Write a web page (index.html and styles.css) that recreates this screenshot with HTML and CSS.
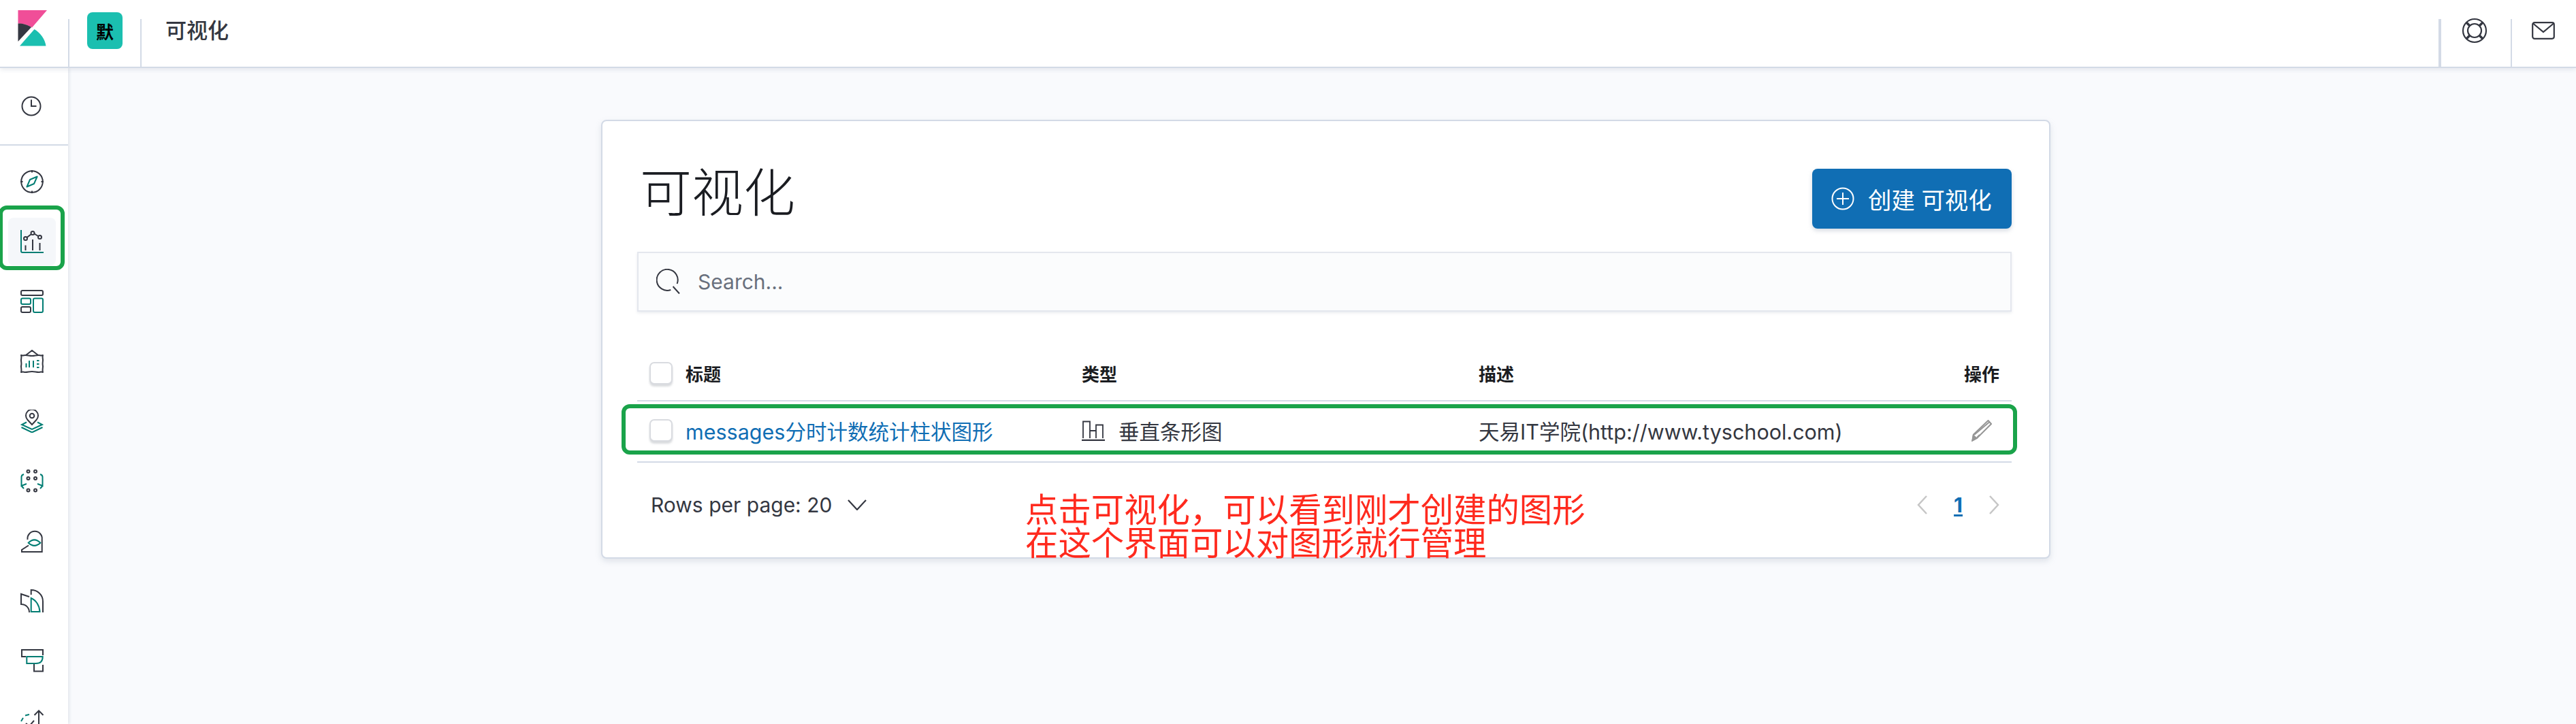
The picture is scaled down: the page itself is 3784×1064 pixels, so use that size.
FILE: index.html
```html
<!DOCTYPE html>
<html lang="zh">
<head>
<meta charset="utf-8">
<title>可视化</title>
<link rel="stylesheet" href="styles.css">
</head>
<body>
<header class="topbar">
  <div class="logo-cell">
    <svg class="logo" width="43" height="53" viewBox="0 0 43 53">
      <path fill="#f04e98" d="M0.5 0H43L21 25.5C15 21.5 8 19.5 0.5 19.5Z"/>
      <path fill="#343741" d="M0.5 19.5C8 19.5 15 21.5 20 25L0.5 46Z"/>
      <path fill="#1bbfb0" d="M3 52.5L24.5 28C33 33 40 42 41.5 52.5Z"/>
    </svg>
  </div>
  <div class="space-cell"><span class="badge">默</span></div>
  <div class="crumb-cell">可视化</div>
  <div class="top-icon top-help">
    <svg width="38" height="38" viewBox="0 0 38 38" fill="none" stroke="#343741">
      <circle cx="19" cy="19" r="17" stroke-width="2.2"/>
      <circle cx="19" cy="19" r="10" stroke-width="2.2"/>
      <path stroke-width="3.5" d="M7 7l5 5M31 7l-5 5M7 31l5-5M31 31l-5-5"/>
    </svg>
  </div>
  <div class="top-icon top-mail">
    <svg width="34" height="26" viewBox="0 0 34 26" fill="none" stroke="#343741" stroke-width="2.2">
      <rect x="1.2" y="1.2" width="31.6" height="23.6" rx="3"/>
      <path d="M2 2.5L17 15L32 2.5"/>
    </svg>
  </div>
</header>

<div class="shell">
  <nav class="sidebar">
    <div class="recent">
      <svg class="icon" width="30" height="30" viewBox="0 0 30 30" fill="none" stroke="#343741" stroke-width="2">
        <circle cx="15" cy="15" r="13.5"/><path d="M15 5.5V15H22.5"/>
      </svg>
    </div>
    <ul class="nav-list">
      <li class="nav-item">
        <svg width="34" height="34" viewBox="0 0 34 34" fill="none" stroke-width="2">
          <circle cx="17" cy="17" r="15.8" stroke="#343741"/>
          <path stroke="#343741" d="M17 0v3.5M17 30.5V34M0 17h3.5M30.5 17H34"/>
          <path stroke="#017d73" stroke-linejoin="round" d="M24.6 9.5L20 20L9.5 24.5L14 14Z"/>
        </svg>
      </li>
      <li class="nav-item is-active">
        <span class="active-bg">
          <svg width="34" height="34" viewBox="0 0 34 34" fill="none" stroke-width="2">
            <path stroke="#017d73" d="M1 0V31a2 2 0 0 0 2 2H34"/>
            <path stroke="#343741" d="M9.500 11L16 6M20.500 5.500L26 9M7.500 22.500V30M18 14V30M28.500 19V30"/>
            <circle cx="7.500" cy="12.500" r="2.500" stroke="#343741"/>
            <circle cx="18" cy="4.500" r="2.500" stroke="#343741"/>
            <circle cx="28.500" cy="10.500" r="2.500" stroke="#343741"/>
          </svg>
        </span>
      </li>
      <li class="nav-item">
        <svg width="34" height="34" viewBox="0 0 34 34" fill="none" stroke-width="2">
          <rect x="1" y="1" width="32" height="7" rx="2" stroke="#343741"/>
          <rect x="1" y="12.500" width="14" height="8.500" rx="2" stroke="#017d73"/>
          <rect x="1" y="25" width="14" height="8" rx="2" stroke="#343741"/>
          <rect x="19" y="12.500" width="14" height="20.500" rx="2" stroke="#017d73"/>
        </svg>
      </li>
      <li class="nav-item">
        <svg width="34" height="34" viewBox="0 0 34 34" fill="none" stroke-width="2">
          <path stroke="#343741" stroke-linejoin="round" d="M8 8L17 1L26 8M1 8C4 9 5 8 7 8C11 8 13 9 17 9C21 9 23 8 27 8C29 8 30 9 33 8C32 11 33 13 33 15C33 18 32 20 33 24C33 27 32 30 33 33C30 32 29 33 27 33C23 33 21 32 17 32C13 32 11 33 7 33C5 33 4 32 1 33C2 30 1 27 1 24C2 20 1 18 1 15C1 13 2 11 1 8Z"/>
          <path stroke="#017d73" d="M8.500 20V26M13 16V26M19 16V26M24 16H27.500M24 21H27.500M24 26H27.500"/>
        </svg>
      </li>
      <li class="nav-item">
        <svg width="34" height="34" viewBox="0 0 34 34" fill="none" stroke-width="2">
          <path stroke="#343741" d="M17 22L10.500 15A9 9 0 1 1 23.500 15Z"/>
          <circle cx="17" cy="9" r="3.300" stroke="#343741"/>
          <path stroke="#017d73" d="M9 18.500L2 22L17 29L32 22L25 18.500M1.500 26L17 33.500L32.500 26"/>
        </svg>
      </li>
      <li class="nav-item">
        <svg width="34" height="34" viewBox="0 0 34 34" fill="none" stroke-width="2">
          <g stroke="#343741">
            <circle cx="11.500" cy="2.800" r="2"/><circle cx="22" cy="2.800" r="2"/>
            <circle cx="11.500" cy="13" r="2"/><circle cx="22" cy="13" r="2"/>
            <circle cx="11.500" cy="30.500" r="2"/><circle cx="22" cy="30.500" r="2"/>
          </g>
          <path stroke="#017d73" d="M5 7Q1.500 8 1.500 11V24L9 21M1.500 24L5 28M29 7Q32.500 8 32.500 11V24L25 21M32.500 24L29 28"/>
        </svg>
      </li>
      <li class="nav-item">
        <svg width="34" height="34" viewBox="0 0 34 34" fill="none" stroke-width="2">
          <path stroke="#343741" d="M10.500 15A10.700 10.700 0 1 1 31.700 15V33H2V30L12 23.500"/>
          <path stroke="#017d73" d="M11.700 19.700Q20.500 11 29.300 19.700Q20.500 28 11.700 19.700Z"/>
        </svg>
      </li>
      <li class="nav-item">
        <svg width="34" height="34" viewBox="0 0 34 34" fill="none" stroke-width="2">
          <path stroke="#343741" d="M15.700 8V1C25 1 33 8 33 18V34M13 11L1 7V22C8 22 13 27 13 34"/>
          <path stroke="#017d73" d="M15.700 13C23 16 28 24 28.500 33H15.700Z"/>
        </svg>
      </li>
      <li class="nav-item">
        <svg width="34" height="34" viewBox="0 0 34 34" fill="none" stroke-width="2">
          <path stroke="#343741" d="M1 11H8M2 11V1H33V9M20 22V32.500H33V23"/>
          <path stroke="#017d73" d="M9.300 11H32.700Q32.700 21 23 21H9.300Z"/>
        </svg>
      </li>
      <li class="nav-item">
        <svg width="34" height="34" viewBox="0 0 34 34" fill="none" stroke-width="2">
          <path stroke="#343741" d="M27 34V3M20.500 9L27 2.500L33.500 9M8 21L13 25L20 17"/>
          <path stroke="#017d73" d="M7 9.500L13 8M1 18L4 13"/>
        </svg>
      </li>
    </ul>
  </nav>

  <main class="content">
    <section class="card">
      <div class="card-head">
        <h1 class="page-title">可视化</h1>
        <button class="create-btn" type="button">
          <svg width="34" height="34" viewBox="0 0 34 34" fill="none" stroke="#fff" stroke-width="2">
            <circle cx="17" cy="17" r="15.500"/><path d="M17 8V26M8 17H26"/>
          </svg>
          <span>创建 可视化</span>
        </button>
      </div>

      <div class="search">
        <svg width="36" height="38" viewBox="0 0 36 38" fill="none" stroke="#343741" stroke-width="2">
          <path d="M21.300 31A15.500 15.500 0 1 1 30.600 22M24.600 26L34 36.500"/>
        </svg>
        <span class="search-ph">Search...</span>
      </div>

      <div class="tbl-row tbl-head">
        <span class="check"></span>
        <span>标题</span>
        <span>类型</span>
        <span>描述</span>
        <span class="act-head">操作</span>
      </div>
      <div class="tbl-row tbl-body">
        <span class="check"></span>
        <a class="item-link" href="#">messages分时计数统计柱状图形</a>
        <span class="type-cell">
          <svg width="34" height="30" viewBox="0 0 34 30" fill="none" stroke="#343741" stroke-width="1.800">
            <path d="M2 26V1.500H12V26M12 15H21M21 26V6.500H31V26"/>
            <path d="M0 29H34" stroke-width="2.400"/>
          </svg>
          垂直条形图
        </span>
        <span>天易IT学院(http://www.tyschool.com)</span>
        <svg class="pencil" width="30" height="32" viewBox="0 0 30 32" fill="none" stroke="#969696" stroke-width="2">
          <path d="M24.500 1L29 6L8 27L1.500 30.500L3 21.500Z"/>
          <path d="M4 22L26 3.500M8 26L12 22"/>
          <path fill="#969696" stroke="none" d="M0 32L2 21L9 27Z"/>
        </svg>
      </div>

      <div class="card-foot">
        <span class="rows-per">Rows per page: 20
          <svg class="chev-down" width="28" height="16" viewBox="0 0 28 16" fill="none" stroke="#343741" stroke-width="2.200"><path d="M1 1L14 15L27 1"/></svg>
        </span>
        <span class="pager">
          <svg width="15" height="28" viewBox="0 0 15 28" fill="none" stroke="#c6c6c6" stroke-width="2.500"><path d="M14 1L2 14L14 27"/></svg>
          <a class="page-cur" href="#">1</a>
          <svg width="15" height="28" viewBox="0 0 15 28" fill="none" stroke="#c6c6c6" stroke-width="2.500"><path d="M1 1L13 14L1 27"/></svg>
        </span>
      </div>
    </section>
  </main>
</div>

<div class="mark mark-nav"></div>
<div class="mark mark-row"></div>
<p class="note">点击可视化，可以看到刚才创建的图形<br>在这个界面可以对图形就行管理</p>
</body>
</html>
```

FILE: styles.css
```css
* { box-sizing: border-box; }
html, body { margin: 0; padding: 0; height: 1064px; overflow: hidden; }
body {
  position: relative;
  background: #f9fafd;
  color: #343741;
  font-family: Inter, "Noto Sans CJK SC", sans-serif;
  font-size: 30px;
}

/* top bar */
.topbar {
  display: flex;
  height: 100px;
  background: #fff;
  border-bottom: 2px solid #d3dae6;
  box-shadow: 0 3px 6px rgba(152, 162, 179, .18);
  position: relative;
  z-index: 2;
}
.logo-cell { width: 100px; padding: 15px 0 0 26px; }
.logo { display: block; }
.space-cell, .crumb-cell, .top-icon {
  background: linear-gradient(#d3dae6, #d3dae6) left 28px / 2px 70px no-repeat;
}
.space-cell { width: 106px; padding: 18px 0 0 28px; }
.badge {
  display: flex;
  width: 52px;
  height: 54px;
  align-items: center;
  justify-content: center;
  border-radius: 8px;
  background: #1bbfb0;
  color: #000;
  font-size: 26px;
  font-weight: 700;
}
.crumb-cell {
  flex: 1;
  padding: 24px 0 0 37px;
  font-size: 31px;
  font-weight: 500;
  line-height: 42px;
}
.top-icon { display: flex; justify-content: center; }
.top-help { width: 106px; padding-top: 26px; background-size: 4px 70px; }
.top-mail { width: 96px; padding-top: 32px; }
.top-help svg, .top-mail svg { display: block; }

/* shell */
.shell { display: flex; height: 964px; overflow: hidden; }
.sidebar {
  flex: none;
  width: 100px;
  background: #fff;
  box-shadow: 2px 0 4px rgba(152, 162, 179, .22);
  position: relative;
  z-index: 1;
}
.recent {
  display: flex;
  height: 114px;
  padding: 41px 0 0 31px;
  border-bottom: 2px solid #d3dae6;
}
.nav-list { list-style: none; margin: 0; padding: 9px 6px 0 0; }
.nav-item {
  display: flex;
  height: 88px;
  align-items: center;
  justify-content: center;
}
.active-bg {
  display: flex;
  width: 70px;
  height: 70px;
  align-items: center;
  justify-content: center;
  border-radius: 8px;
  background: #f5f7fa;
}

/* card */
.content { flex: 1; padding: 76px 0 0 783px; }
.card {
  width: 2129px;
  height: 645px;
  padding: 70px 55px 0 51px;
  background: #fff;
  border: 2px solid #d3dae6;
  border-radius: 8px;
  box-shadow: 0 4px 8px rgba(152, 162, 179, .25);
}
.card-head { display: flex; justify-content: space-between; align-items: flex-start; height: 88px; }
.page-title {
  margin: -3px 0 0 4px;
  font-size: 76px;
  font-weight: 300;
  line-height: 76px;
  color: #1a1c21;
}
.create-btn {
  display: flex;
  align-items: center;
  gap: 20px;
  width: 293px;
  height: 88px;
  padding: 0 0 0 28px;
  border: 0;
  border-radius: 8px;
  background: #106eb4;
  color: #fff;
  font: 400 34.4px Inter, "Noto Sans CJK SC", sans-serif;
  box-shadow: 0 3px 6px rgba(152, 162, 179, .4);
}

.search {
  display: flex;
  align-items: center;
  gap: 25px;
  height: 88px;
  margin-top: 34px;
  padding-left: 26px;
  background: #fbfcfd;
  border: 2px solid #e4e7ee;
  box-shadow: 0 2px 4px rgba(152, 162, 179, .2);
}
.search-ph { color: #69707d; font-size: 30px; }

/* table */
.tbl-row {
  display: grid;
  grid-template-columns: 53px 582px 583px 1fr 52px;
  align-items: center;
  padding: 0 18px 0 18px;
}
.tbl-head {
  height: 82px;
  margin-top: 50px;
  border-bottom: 2px solid #d3dae6;
  font-size: 26px;
  font-weight: 700;
  color: #1a1c21;
}
.act-head { white-space: nowrap; }
.tbl-body {
  height: 90px;
  padding-bottom: 3px;
  border-bottom: 2px solid #d3dae6;
  font-size: 30.5px;
}
.check {
  display: block;
  width: 34px;
  height: 33px;
  border: 2px solid #d9dbe0;
  border-radius: 7px;
  background: #fff;
  box-shadow: 0 3px 3px rgba(120, 125, 135, .28);
}
.item-link { color: #106eb4; text-decoration: none; }
.type-cell { display: flex; align-items: center; gap: 20px; }
.pencil { justify-self: center; }

.card-foot {
  display: flex;
  justify-content: space-between;
  align-items: center;
  height: 124px;
  padding: 0 18px 0 20px;
}
.rows-per { display: flex; align-items: center; gap: 23px; }
.pager { display: flex; align-items: center; gap: 39px; }
.page-cur {
  color: #106eb4;
  font-size: 30px;
  font-weight: 700;
  line-height: 30px;
  text-decoration: underline;
  text-underline-offset: 3px;
}

/* annotations laid over the screenshot */
.mark { position: absolute; border: 6px solid #1aa34a; border-radius: 12px; z-index: 3; }
.mark-nav { left: -2px; top: 302px; width: 97px; height: 95px; }
.mark-row { left: 913px; top: 594px; width: 2050px; height: 74px; }
.note {
  position: absolute;
  left: 1506px;
  top: 722px;
  margin: 0;
  z-index: 3;
  color: #ff2a1e;
  font-size: 48.4px;
  line-height: 49px;
  font-family: "Noto Sans CJK SC", sans-serif;
  font-weight: 400;
}
```
